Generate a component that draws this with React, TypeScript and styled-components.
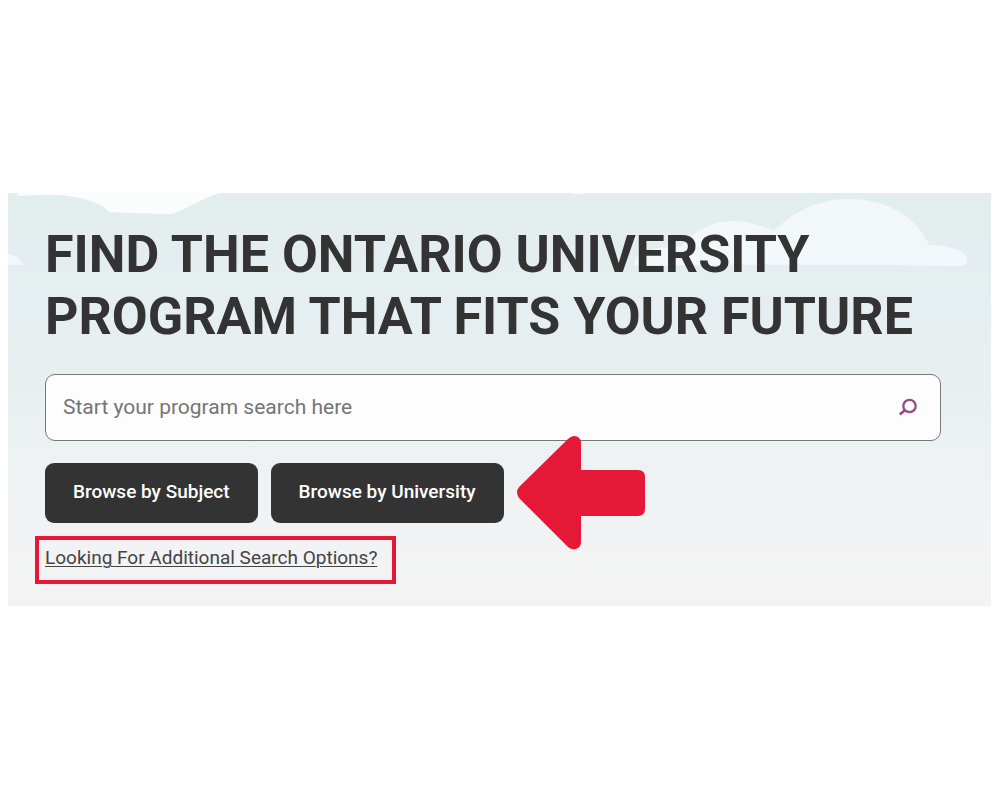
import React from "react";
import styled, { createGlobalStyle } from "styled-components";

const GlobalStyle = createGlobalStyle`
  *, *::before, *::after { box-sizing: border-box; }
  body { margin: 0; background: #ffffff; font-family: Roboto, "Liberation Sans", sans-serif; }
`;

const Page = styled.main`
  min-height: 100vh;
  display: flex;
  align-items: center;
  padding: 0 9px 1px 8px;
`;

const Hero = styled.section`
  position: relative;
  flex: 1;
  padding: 31px 50px 22px 37px;
  background: linear-gradient(#e2edee, #e7eff1 42%, #eff2f4 70%, #f3f3f3 94%);
  color: #333333;
`;

const Scenery = styled.svg`
  position: absolute;
  top: 0;
  left: 0;
  width: 100%;
  height: auto;
`;

const Content = styled.div`
  position: relative;
  display: flex;
  flex-direction: column;
  align-items: flex-start;
`;

const Title = styled.h1`
  margin: 0 0 26px;
  font-size: 52px;
  line-height: 62px;
  font-weight: 700;
  text-transform: uppercase;
`;

const SearchForm = styled.form`
  display: flex;
  align-items: center;
  align-self: stretch;
  height: 67px;
  margin-bottom: 22px;
  padding: 0 22px 2px 17px;
  background: #fdfdfd;
  border: 1px solid #777777;
  border-radius: 10px;
`;

const SearchInput = styled.input`
  flex: 1;
  min-width: 0;
  padding: 0;
  border: 0;
  outline: 0;
  background: transparent;
  color: #333333;
  font: 400 21px/24px Roboto, "Liberation Sans", sans-serif;

  &::placeholder { color: #757575; opacity: 1; }
`;

const SearchButton = styled.button`
  display: flex;
  padding: 0;
  border: 0;
  background: transparent;
  color: #954e7c;
  cursor: pointer;
`;

const Actions = styled.div`
  display: flex;
  align-items: center;
  gap: 13px;
  margin-bottom: 13px;
`;

const BrowseButton = styled.button`
  height: 60px;
  padding: 0 28px 2px;
  border: 0;
  border-radius: 9px;
  background: #333333;
  color: #ffffff;
  font: 500 19px/24px Roboto, "Liberation Sans", sans-serif;
  white-space: nowrap;
  cursor: pointer;
`;

const PointerSlot = styled.div`
  position: relative;
  width: 128px;
  height: 60px;
`;

const Pointer = styled.svg`
  position: absolute;
  top: -28px;
  left: 0;
`;

const Highlight = styled.div`
  min-width: 361px;
  margin-left: -10px;
  padding: 6px 6px 10px;
  border: 4px solid #e51937;
`;

const OptionsLink = styled.a`
  display: block;
  width: fit-content;
  color: #444444;
  font-size: 19px;
  line-height: 24px;
  text-decoration: underline;
  text-decoration-thickness: 1px;
  text-underline-offset: 2px;
`;

export default function App() {
  return (
    <>
      <GlobalStyle />
      <Page>
        <Hero>
          <Scenery viewBox="0 0 983 412" aria-hidden="true">
            <path fill="#fafdfc" d="M10 0H212C196 5 180 15 164 21C145 21 120 20 101 19C92 8 66 2 43 2C31 1 20 3 10 3Z" />
            <path fill="#f2f7fa" d="M0 61C7 62 13 66 15 71Q15 72 12 72H0Z" />
            <path fill="#f2f7fa" d="M563 0H577Q571 3 563 0Z" />
            <path fill="#f2f7fa" d="M626 72C626 59 646 54 674 53C686 37 705 28 726 28C742 28 756 34 766 38C786 18 811 6 842 6C883 6 911 28 921 52C942 52 959 58 959 67Q960 74 951 73Q870 71 626 72Z" />
          </Scenery>
          <Content>
            <Title>
              Find the Ontario University
              <br />
              program that fits your future
            </Title>
            <SearchForm role="search" onSubmit={(event) => event.preventDefault()}>
              <SearchInput
                type="text"
                aria-label="Program search"
                placeholder="Start your program search here"
              />
              <SearchButton type="submit" aria-label="Search">
                <svg width="20" height="20" viewBox="0 0 20 20" fill="none" stroke="currentColor">
                  <circle cx="11.5" cy="9" r="6.2" strokeWidth="2.3" />
                  <path d="M6.8 13.2L1.8 17.6" strokeWidth="2.6" />
                </svg>
              </SearchButton>
            </SearchForm>
            <Actions>
              <BrowseButton type="button">Browse by Subject</BrowseButton>
              <BrowseButton type="button">Browse by University</BrowseButton>
              <PointerSlot aria-hidden="true">
                <Pointer width="128" height="115" viewBox="0 0 128 115">
                  <path
                    fill="#e51937"
                    d="M2 52L51 4Q56 -1 61 2Q64 4 64 8V35H121Q128 35 128 42V74Q128 81 121 81H64V107Q64 111 61 113Q56 116 51 112L2 63Q-2 57 2 52Z"
                  />
                </Pointer>
              </PointerSlot>
            </Actions>
            <Highlight>
              <OptionsLink href="#search-options">Looking For Additional Search Options?</OptionsLink>
            </Highlight>
          </Content>
        </Hero>
      </Page>
    </>
  );
}
